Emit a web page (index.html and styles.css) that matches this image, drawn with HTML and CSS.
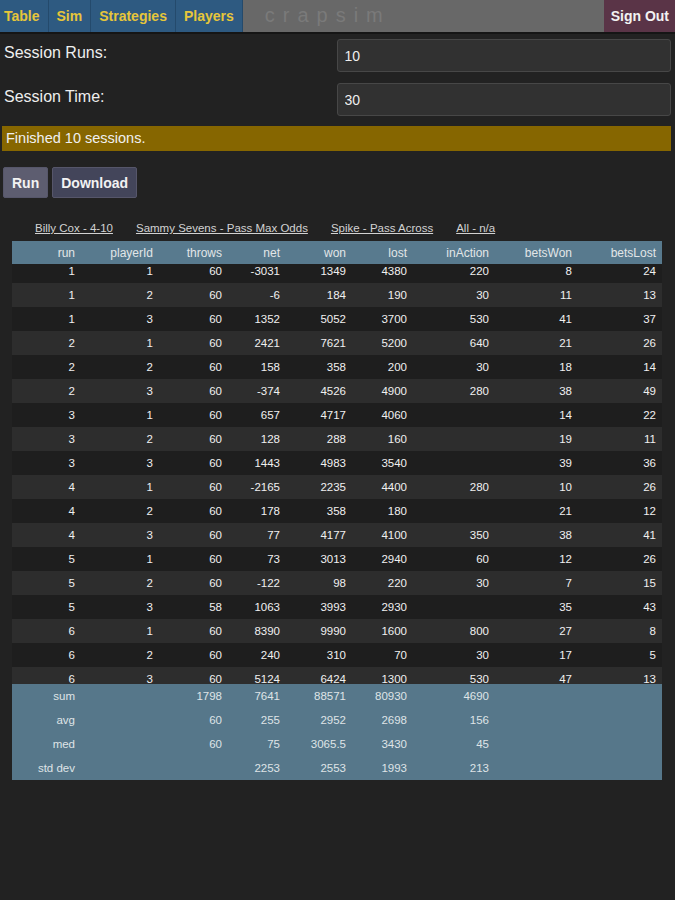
FILE: index.html
```html
<!DOCTYPE html>
<html lang="en">
<head>
<meta charset="utf-8">
<title>crapsim</title>
<link rel="stylesheet" href="styles.css">
</head>
<body>
<nav class="nav">
  <a class="tab tab-first">Table</a>
  <a class="tab">Sim</a>
  <a class="tab">Strategies</a>
  <a class="tab">Players</a>
  <div class="brand">crapsim</div>
  <a class="signout">Sign Out</a>
</nav>
<main class="main">
  <div class="form">
    <label class="label">Session Runs:</label>
    <input class="input" type="text" value="10">
    <label class="label">Session Time:</label>
    <input class="input" type="text" value="30">
  </div>
  <div class="status">Finished 10 sessions.</div>
  <div class="buttons">
    <button class="btn btn-run">Run</button>
    <button class="btn btn-dl">Download</button>
  </div>
  <div class="players">
    <a class="plink">Billy Cox - 4-10</a>
    <a class="plink">Sammy Sevens - Pass Max Odds</a>
    <a class="plink">Spike - Pass Across</a>
    <a class="plink">All - n/a</a>
  </div>
  <div class="grid">
    <table class="results head">
      <thead>
        <tr><th class="c1">run</th><th class="c2">playerId</th><th class="c3">throws</th><th class="c4">net</th><th class="c5">won</th><th class="c6">lost</th><th class="c7">inAction</th><th class="c8">betsWon</th><th class="c9">betsLost</th></tr>
      </thead>
    </table>
    <div class="body-clip">
      <table class="results body">
        <colgroup><col class="c1"><col class="c2"><col class="c3"><col class="c4"><col class="c5"><col class="c6"><col class="c7"><col class="c8"><col class="c9"></colgroup>
        <tbody>
          <tr><td>1</td><td>1</td><td>60</td><td>-3031</td><td>1349</td><td>4380</td><td>220</td><td>8</td><td>24</td></tr>
          <tr><td>1</td><td>2</td><td>60</td><td>-6</td><td>184</td><td>190</td><td>30</td><td>11</td><td>13</td></tr>
          <tr><td>1</td><td>3</td><td>60</td><td>1352</td><td>5052</td><td>3700</td><td>530</td><td>41</td><td>37</td></tr>
          <tr><td>2</td><td>1</td><td>60</td><td>2421</td><td>7621</td><td>5200</td><td>640</td><td>21</td><td>26</td></tr>
          <tr><td>2</td><td>2</td><td>60</td><td>158</td><td>358</td><td>200</td><td>30</td><td>18</td><td>14</td></tr>
          <tr><td>2</td><td>3</td><td>60</td><td>-374</td><td>4526</td><td>4900</td><td>280</td><td>38</td><td>49</td></tr>
          <tr><td>3</td><td>1</td><td>60</td><td>657</td><td>4717</td><td>4060</td><td></td><td>14</td><td>22</td></tr>
          <tr><td>3</td><td>2</td><td>60</td><td>128</td><td>288</td><td>160</td><td></td><td>19</td><td>11</td></tr>
          <tr><td>3</td><td>3</td><td>60</td><td>1443</td><td>4983</td><td>3540</td><td></td><td>39</td><td>36</td></tr>
          <tr><td>4</td><td>1</td><td>60</td><td>-2165</td><td>2235</td><td>4400</td><td>280</td><td>10</td><td>26</td></tr>
          <tr><td>4</td><td>2</td><td>60</td><td>178</td><td>358</td><td>180</td><td></td><td>21</td><td>12</td></tr>
          <tr><td>4</td><td>3</td><td>60</td><td>77</td><td>4177</td><td>4100</td><td>350</td><td>38</td><td>41</td></tr>
          <tr><td>5</td><td>1</td><td>60</td><td>73</td><td>3013</td><td>2940</td><td>60</td><td>12</td><td>26</td></tr>
          <tr><td>5</td><td>2</td><td>60</td><td>-122</td><td>98</td><td>220</td><td>30</td><td>7</td><td>15</td></tr>
          <tr><td>5</td><td>3</td><td>58</td><td>1063</td><td>3993</td><td>2930</td><td></td><td>35</td><td>43</td></tr>
          <tr><td>6</td><td>1</td><td>60</td><td>8390</td><td>9990</td><td>1600</td><td>800</td><td>27</td><td>8</td></tr>
          <tr><td>6</td><td>2</td><td>60</td><td>240</td><td>310</td><td>70</td><td>30</td><td>17</td><td>5</td></tr>
          <tr><td>6</td><td>3</td><td>60</td><td>5124</td><td>6424</td><td>1300</td><td>530</td><td>47</td><td>13</td></tr>
        </tbody>
      </table>
    </div>
    <table class="results foot">
      <colgroup><col class="c1"><col class="c2"><col class="c3"><col class="c4"><col class="c5"><col class="c6"><col class="c7"><col class="c8"><col class="c9"></colgroup>
      <tfoot>
        <tr><td>sum</td><td></td><td>1798</td><td>7641</td><td>88571</td><td>80930</td><td>4690</td><td></td><td></td></tr>
        <tr><td>avg</td><td></td><td>60</td><td>255</td><td>2952</td><td>2698</td><td>156</td><td></td><td></td></tr>
        <tr><td>med</td><td></td><td>60</td><td>75</td><td>3065.5</td><td>3430</td><td>45</td><td></td><td></td></tr>
        <tr><td>std dev</td><td></td><td></td><td>2253</td><td>2553</td><td>1993</td><td>213</td><td></td><td></td></tr>
      </tfoot>
    </table>
  </div>
</main>
</body>
</html>
```

FILE: styles.css
```css
* { box-sizing: border-box; }

body {
  margin: 0;
  background: #222222;
  color: #e8e8e8;
  font-family: "Liberation Sans", Arial, sans-serif;
}

.nav {
  display: flex;
  height: 34px;
  background: #686868;
  border-bottom: 2px solid #151515;
}

.tab {
  display: flex;
  align-items: center;
  padding: 0 8px 1px;
  background: #2e5a81;
  color: #e6c63a;
  font-weight: bold;
  font-size: 14px;
  border-right: 1px solid #244a6c;
}

.tab-first { padding-left: 4px; }

.brand {
  flex: 1;
  display: flex;
  align-items: center;
  padding: 0 0 1px 22px;
  font-size: 20px;
  letter-spacing: 8px;
  color: #7a7a7a;
}

.signout {
  display: flex;
  align-items: center;
  padding: 0 6px 1px 7px;
  background: #5a3447;
  color: #f2f2f2;
  font-weight: bold;
  font-size: 14px;
}

.main {
  padding: 5px 4px 0 2px;
}

.form {
  display: grid;
  grid-template-columns: 1fr 1fr;
  row-gap: 11px;
}

.label {
  font-size: 16px;
  padding: 5px 2px 0;
  color: #eeeeee;
}

.input {
  height: 33px;
  margin: 0;
  background: #313131;
  border: 1px solid #474747;
  border-radius: 3px;
  color: #eeeeee;
  font-family: "Liberation Sans", Arial, sans-serif;
  font-size: 14px;
  padding: 0 7px;
}

.status {
  margin-top: 10px;
  height: 25px;
  line-height: 24px;
  padding-left: 4px;
  background: #866600;
  color: #f0f0f0;
  font-size: 14.5px;
}

.buttons {
  display: flex;
  gap: 4px;
  margin: 16px 0 0 1px;
}

.btn {
  height: 31px;
  padding: 0 8px;
  border: 1px solid #56566a;
  border-radius: 2px;
  color: #f2f2f2;
  font-family: "Liberation Sans", Arial, sans-serif;
  font-weight: bold;
  font-size: 14px;
}

.btn-run { background: #5d5d70; }
.btn-dl { background: #43455a; }

.players {
  display: flex;
  gap: 23px;
  margin-top: 23px;
  padding-left: 33px;
  font-size: 11.5px;
  line-height: 14px;
}

.plink {
  color: #d2d2d2;
  text-decoration: underline;
}

.grid {
  margin: 6px 9px 0 10px;
  width: 650px;
}

.results {
  width: 650px;
  border-collapse: collapse;
  table-layout: fixed;
  font-size: 11.5px;
}

.body-clip {
  height: 420px;
  overflow: hidden;
}

.results.body {
  margin-top: -5px;
}

.results th {
  height: 23px;
  padding: 0 6px;
  background: #587a8e;
  color: #e2e6e8;
  font-weight: normal;
  font-size: 12px;
  text-align: right;
}

.c1 { width: 69px; }
.c2 { width: 78px; }
.c3 { width: 69px; }
.c4 { width: 58px; }
.c5 { width: 66px; }
.c6 { width: 61px; }
.c7 { width: 82px; }
.c8 { width: 83px; }
.c9 { width: 84px; }

.results td {
  height: 24px;
  padding: 0 6px;
  text-align: right;
  color: #f0f0f0;
  white-space: nowrap;
}

.results tbody tr:nth-child(odd) td { background: #1e1e1e; }
.results tbody tr:nth-child(even) td { background: #2d2d2d; }

.results tfoot td {
  background: #56778a;
  color: #dfe4e7;
}
```
